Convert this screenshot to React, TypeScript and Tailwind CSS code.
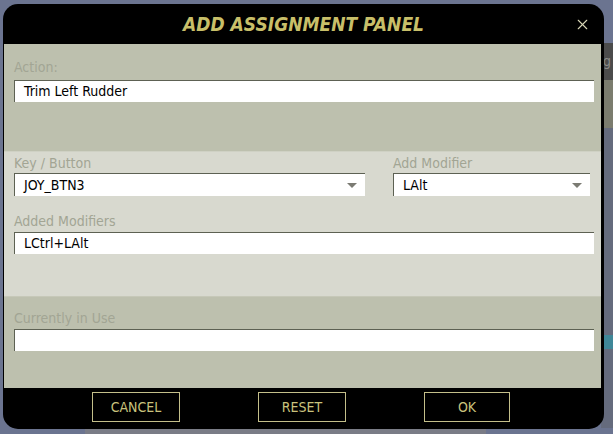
import { X } from 'lucide-react'

const font = { fontFamily: '"DejaVu Sans Condensed", "DejaVu Sans", sans-serif' }

function Label({ text }: { text: string }) {
  return <p className="h-[14px] text-[14px] leading-[14px] text-[#a2a594]">{text}</p>
}

function Field({ value }: { value: string }) {
  return (
    <div className="flex h-[22px] items-center border-t border-l border-[#5d6153] bg-white pl-[9px] text-[14px] text-black">
      {value}
    </div>
  )
}

function Select({ value }: { value: string }) {
  return (
    <div className="flex h-[23px] items-center border-t border-l border-[#5d6153] bg-white pr-[8px] pl-[9px] text-[14px] text-black">
      <span className="flex-1">{value}</span>
      <span className="h-0 w-0 border-x-[5px] border-t-[5px] border-x-transparent border-t-[#7b7b73]" />
    </div>
  )
}

function FooterButton({ text }: { text: string }) {
  return (
    <button className="flex h-[30px] items-center justify-center border border-[#c4bf8a] text-[14px] text-[#c9c27c]">
      {text}
    </button>
  )
}

export default function App() {
  return (
    <div className="relative h-[434px] w-[613px] overflow-hidden bg-[#6b7490]" style={font}>
      {/* background app peeking out behind the panel */}
      <div className="absolute top-[43px] right-0 h-[37px] w-[12px] bg-[#4b4b4b] pl-[2px] pt-[8px] text-[14px] text-[#8a8a86]">g</div>
      <div className="absolute top-[80px] right-0 h-[48px] w-[12px] bg-[#7b7c6e]" />
      <div className="absolute top-[128px] right-0 h-[300px] w-[12px] bg-[#656b7d]" />
      <div className="absolute top-[335px] right-0 h-[14px] w-[12px] bg-[#3f8798]" />
      <div className="absolute bottom-0 left-[85px] h-[10px] w-[401px] bg-[#7a7c86]" />

      <div className="relative mt-[4px] ml-[3px] flex h-[425px] w-[601px] flex-col overflow-hidden rounded-[15px] bg-black">
        {/* Header */}
        <div className="relative flex h-[40px] shrink-0 items-center justify-center">
          <h1 className="text-[19px] font-bold italic text-[#c8bf69]">ADD ASSIGNMENT PANEL</h1>
          <X size={17} strokeWidth={1.6} className="absolute top-[12px] right-[13px] text-[#d6d4b4]" />
        </div>

        <div className="mr-[3px] ml-[1px] flex flex-col">
          {/* Action */}
          <div className="h-[107px] bg-[#bdc0ae] pt-[16px] pr-[7px] pl-[10px]">
            <Label text="Action:" />
            <div className="mt-[6px]">
              <Field value="Trim Left Rudder" />
            </div>
          </div>

          {/* Key / modifiers */}
          <div className="h-[145px] border-t border-[#cfd1c4] bg-[#d8d9cf] pt-[4px] pr-[7px] pl-[10px]">
            <div className="flex gap-[28px]">
              <div className="w-[351px]">
                <Label text="Key / Button" />
                <div className="mt-[3px]">
                  <Select value="JOY_BTN3" />
                </div>
              </div>
              <div className="w-[197px]">
                <Label text="Add Modifier" />
                <div className="mt-[3px]">
                  <Select value="LAlt" />
                </div>
              </div>
            </div>
            <div className="mt-[18px]">
              <Label text="Added Modifiers" />
              <div className="mt-[4px]">
                <Field value="LCtrl+LAlt" />
              </div>
            </div>
          </div>

          {/* Currently in use */}
          <div className="h-[92px] border-t border-[#c6c8b8] bg-[#bdc0ae] pt-[14px] pr-[7px] pl-[10px]">
            <Label text="Currently in Use" />
            <div className="mt-[4px]">
              <Field value="" />
            </div>
          </div>
        </div>

        {/* Footer */}
        <div className="flex flex-1 items-start pt-[4px]">
          <div className="grid w-full grid-cols-[88px_88px_86px] gap-x-[78px] pl-[89px]">
            <FooterButton text="CANCEL" />
            <FooterButton text="RESET" />
            <FooterButton text="OK" />
          </div>
        </div>
      </div>
    </div>
  )
}
